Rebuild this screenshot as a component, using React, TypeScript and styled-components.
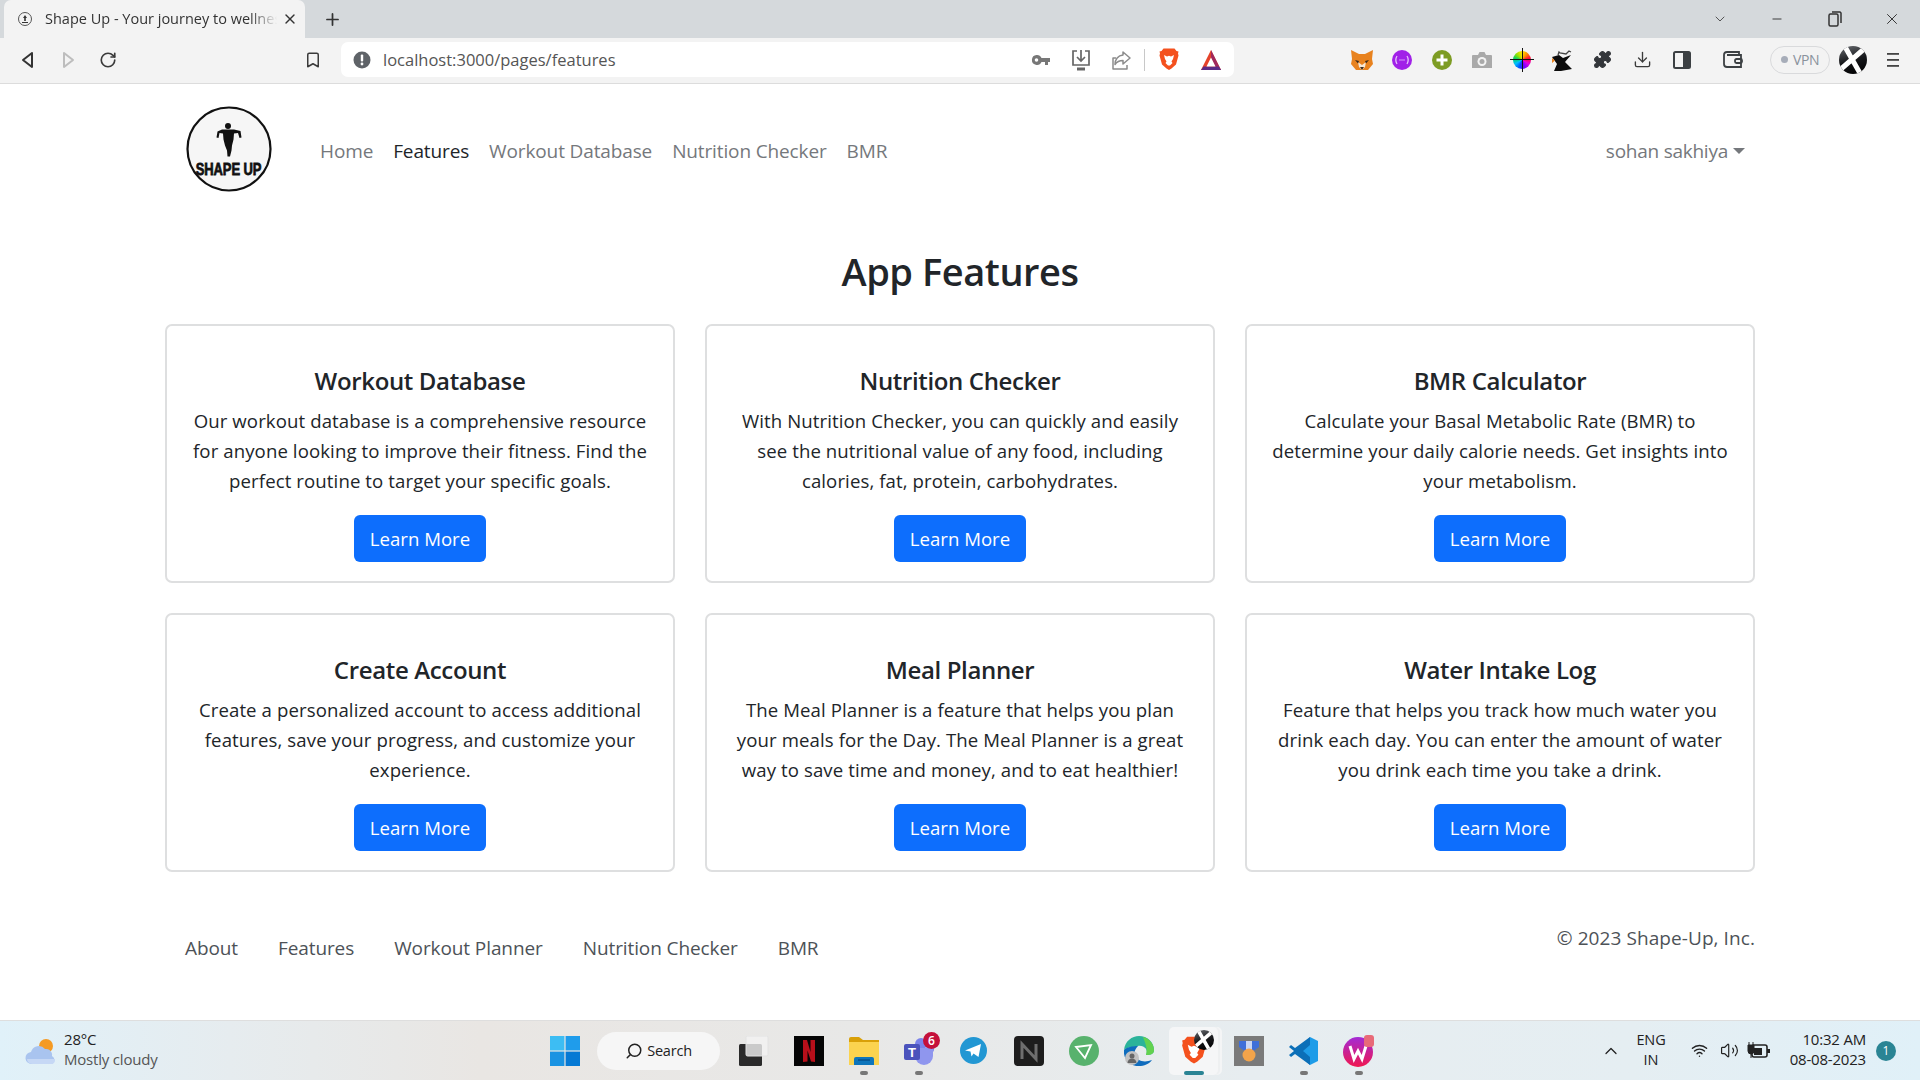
import React from 'react';
import {Bookmark, ChevronDown, ChevronUp, Download, Minus, Plus, Puzzle, RotateCw, Search, Volume2, Wifi, X} from 'lucide-react';
import styled, {createGlobalStyle} from 'styled-components';

const GlobalStyle = createGlobalStyle`
  html, body { margin: 0; padding: 0; background: #fff; }
  body { font-family: "Open Sans", "Noto Sans", sans-serif; color: #212529; }
  * { box-sizing: border-box; }
`;

const Screen = styled.div`
  width: 1920px;
  height: 1080px;
  display: flex;
  flex-direction: column;
  overflow: hidden;
`;

/* browser chrome */
const TabStrip = styled.div`
  height: 38px;
  flex: none;
  display: flex;
  align-items: flex-end;
  background: #d5d9dc;
  padding-left: 4px;
`;
const Tab = styled.div`
  width: 301px;
  height: 38px;
  display: flex;
  align-items: center;
  background: #f3f3f3;
  border-radius: 7px 7px 0 0;
  padding-left: 14px;
  color: #333;
`;
const TabTitle = styled.span`
  width: 237px;
  margin-left: 13px;
  padding-bottom: 2px;
  font-size: 14.5px;
  white-space: nowrap;
  overflow: hidden;
  -webkit-mask-image: linear-gradient(90deg, #000 86%, transparent 98%);
  mask-image: linear-gradient(90deg, #000 86%, transparent 98%);
`;
const NewTab = styled.div`
  width: 54px;
  height: 38px;
  display: flex;
  align-items: center;
  justify-content: center;
  color: #333;
`;
const WindowButtons = styled.div`
  margin-left: auto;
  height: 38px;
  display: flex;
  align-items: center;
  color: #333;
`;
const WinSlot = styled.div<{$w: number}>`
  width: ${p => p.$w}px;
  display: flex;
  justify-content: center;
`;
const Toolbar = styled.div`
  height: 46px;
  flex: none;
  display: flex;
  align-items: center;
  padding: 0 0 2px 8px;
  background: #f3f3f3;
  border-bottom: 1px solid #dcdcdc;
`;
const Slot = styled.div<{$w?: number; $ml?: number; $color?: string}>`
  width: ${p => p.$w ?? 40}px;
  height: 34px;
  margin-left: ${p => p.$ml ?? 0}px;
  flex: none;
  display: flex;
  align-items: center;
  justify-content: center;
  color: ${p => p.$color ?? '#3a3a3a'};
`;
const Omnibox = styled.div`
  width: 893px;
  height: 35px;
  margin-left: 8px;
  flex: none;
  display: flex;
  align-items: center;
  background: #fff;
  border-radius: 7px;
  padding-left: 12px;
`;
const Url = styled.span`
  margin-left: 12px;
  font-size: 16.5px;
  color: #555;
`;
const OmniActions = styled.div`
  margin-left: auto;
  display: flex;
  align-items: center;
  padding-right: 2px;
`;
const Separator = styled.div`
  width: 1px;
  height: 22px;
  background: #c8c8c8;
  margin: 0 3px;
`;
const VpnPill = styled.div`
  width: 60px;
  height: 28px;
  margin-left: 17px;
  flex: none;
  display: flex;
  align-items: center;
  justify-content: center;
  gap: 5px;
  border: 1.5px solid #d9dadc;
  border-radius: 14px;
  font-size: 14px;
  letter-spacing: -0.4px;
  color: #8a929c;
`;
const VpnDot = styled.span`
  width: 7px;
  height: 7px;
  border-radius: 50%;
  background: #a7adb9;
`;
const ColorWheel = styled.span`
  position: relative;
  width: 18px;
  height: 18px;
  border-radius: 50%;
  background: conic-gradient(#ffe600, #ff8a00, #ff0040, #e000e0, #7a00ff, #0050ff, #00c0ff, #00d060, #9be000, #ffe600);
  &::before {
    content: '';
    position: absolute;
    left: 8.5px;
    top: -3px;
    width: 1px;
    height: 24px;
    background: #111;
  }
  &::after {
    content: '';
    position: absolute;
    left: -3px;
    top: 8.5px;
    width: 24px;
    height: 1px;
    background: #111;
  }
`;

/* page */
const Page = styled.main`
  flex: 1;
  min-height: 0;
  width: 1590px;
  margin-left: 165px;
  display: flex;
  flex-direction: column;
`;
const Navbar = styled.nav`
  height: 86px;
  margin-top: 22px;
  display: flex;
  align-items: center;
  padding-left: 21px;
  font-size: 19px;
  letter-spacing: -0.13px;
`;
const Brand = styled.div`
  width: 86px;
  height: 86px;
  margin-right: 48px;
  flex: none;
`;
const NavLink = styled.a<{$active?: boolean}>`
  margin-right: 20px;
  padding-top: 4px;
  color: ${p => (p.$active ? '#212529' : '#75787c')};
`;
const UserMenu = styled.div`
  margin-left: auto;
  margin-right: 10px;
  padding-top: 4px;
  display: flex;
  align-items: center;
  gap: 5px;
  color: #75787c;
  letter-spacing: -0.25px;
`;
const Caret = styled.span`
  width: 0;
  height: 0;
  border-left: 6px solid transparent;
  border-right: 6px solid transparent;
  border-top: 6px solid #75787c;
`;
const Heading = styled.h1`
  margin: 55px 0 0;
  height: 48px;
  line-height: 48px;
  text-align: center;
  font-size: 38px;
  font-weight: 600;
  letter-spacing: -0.45px;
`;
const CardGrid = styled.section`
  margin-top: 29px;
  display: grid;
  grid-template-columns: repeat(3, 510px);
  grid-auto-rows: 259px;
  column-gap: 30px;
  row-gap: 30px;
`;
const Card = styled.article`
  display: flex;
  flex-direction: column;
  align-items: center;
  padding: 40px 16px 0;
  border: 2px solid #dedfe0;
  border-radius: 7px;
  text-align: center;
`;
const CardTitle = styled.h2`
  margin: 0;
  height: 30px;
  line-height: 30px;
  font-size: 24px;
  font-weight: 600;
  letter-spacing: -0.35px;
`;
const CardText = styled.p`
  margin: 10px 0 0;
  width: 466px;
  font-size: 18.6px;
  line-height: 30px;
  letter-spacing: 0.1px;
`;
const LearnButton = styled.button`
  width: 132px;
  height: 47px;
  margin-top: 19px;
  flex: none;
  border: none;
  border-radius: 6px;
  background: #0d6efd;
  color: #fff;
  font-family: inherit;
  font-size: 18.6px;
`;
const Footer = styled.footer`
  margin-top: 53px;
  display: flex;
  align-items: flex-start;
  font-size: 19px;
  letter-spacing: -0.1px;
`;
const FooterLinks = styled.div`
  padding: 10px 0 0 20px;
  display: flex;
  gap: 40px;
  color: #4d5257;
`;
const Copyright = styled.div`
  margin-left: auto;
  color: #4d5257;
  letter-spacing: 0.08px;
`;

/* taskbar */
const Taskbar = styled.footer`
  height: 60px;
  flex: none;
  display: flex;
  align-items: center;
  border-top: 1px solid #dedede;
  background: linear-gradient(90deg, #e0f1f9 0%, #e6ecef 12%, #e9e6e3 25%, #e8e8e7 45%, #e7edf0 65%, #e5eef2 85%, #e0f0f8 100%);
`;
const Weather = styled.div`
  width: 550px;
  flex: none;
  display: flex;
  align-items: center;
  gap: 7px;
  padding-left: 25px;
`;
const WeatherText = styled.div`
  padding-bottom: 4px;
  font-size: 15px;
  line-height: 20px;
  letter-spacing: -0.2px;
  color: #222;
`;
const WeatherSub = styled.div`
  color: #555;
`;
const SearchPill = styled.div`
  width: 123px;
  height: 38px;
  margin: 0 6px 0 17px;
  flex: none;
  display: flex;
  align-items: center;
  justify-content: center;
  gap: 4px;
  border-radius: 19px;
  background: #f6f6f6;
  font-size: 14.5px;
  letter-spacing: -0.2px;
  color: #222;
`;
const TaskSlot = styled.div`
  position: relative;
  width: 55px;
  height: 50px;
  flex: none;
  display: flex;
  align-items: center;
  justify-content: center;
`;
const ActiveTile = styled(TaskSlot)`
  &::before {
    content: '';
    position: absolute;
    top: 1px;
    bottom: 1px;
    left: 3px;
    right: 3px;
    border-radius: 5px;
    background: #f5f6f7;
    box-shadow: 2px 0 0 #eef0f1, 4px 0 0 #f4f5f6;
  }
  > * { position: relative; }
`;
const RunDot = styled.span<{$active?: boolean}>`
  position: absolute !important;
  left: 50%;
  bottom: 1px;
  transform: translateX(-50%);
  width: ${p => (p.$active ? 20 : 8)}px;
  height: 4px;
  border-radius: 2px;
  background: ${p => (p.$active ? '#2a8494' : '#777')};
`;
const NotifyBadge = styled.span`
  position: absolute;
  top: 6px;
  right: 6px;
  width: 17px;
  height: 17px;
  border-radius: 50%;
  background: #c4103a;
  color: #fff;
  font-size: 12px;
  font-weight: 600;
  line-height: 17px;
  text-align: center;
`;
const AvatarOverlay = styled.div`
  position: absolute !important;
  top: 4px;
  right: 7px;
  line-height: 0;
`;
const Tray = styled.div`
  margin-left: auto;
  display: flex;
  align-items: center;
  color: #222;
`;
const TrayLang = styled.div`
  width: 50px;
  margin: 0 8px 0 5px;
  padding-bottom: 2px;
  text-align: center;
  font-size: 14.5px;
  line-height: 20px;
  letter-spacing: -0.1px;
`;
const TrayIcon = styled.div`
  width: 30px;
  display: flex;
  justify-content: center;
`;
const Clock = styled.div`
  width: 90px;
  margin-left: 2px;
  padding-bottom: 4px;
  text-align: right;
  font-size: 15px;
  line-height: 20px;
  letter-spacing: -0.2px;
`;
const CountBadge = styled.div`
  width: 20px;
  height: 20px;
  margin: 0 24px 0 10px;
  border-radius: 50%;
  background: #2a8494;
  color: #fff;
  font-size: 12px;
  line-height: 20px;
  text-align: center;
`;

const features = [
  {title: 'Workout Database', text: 'Our workout database is a comprehensive resource for anyone looking to improve their fitness. Find the perfect routine to target your specific goals.'},
  {title: 'Nutrition Checker', text: 'With Nutrition Checker, you can quickly and easily see the nutritional value of any food, including calories, fat, protein, carbohydrates.'},
  {title: 'BMR Calculator', text: 'Calculate your Basal Metabolic Rate (BMR) to determine your daily calorie needs. Get insights into your metabolism.'},
  {title: 'Create Account', text: 'Create a personalized account to access additional features, save your progress, and customize your experience.'},
  {title: 'Meal Planner', text: 'The Meal Planner is a feature that helps you plan your meals for the Day. The Meal Planner is a great way to save time and money, and to eat healthier!'},
  {title: 'Water Intake Log', text: 'Feature that helps you track how much water you drink each day. You can enter the amount of water you drink each time you take a drink.'},
];

const Logo = () => (
  <svg width="86" height="86" viewBox="0 0 86 86">
    <circle cx="43" cy="43" r="41.5" fill="#f6f6f6" stroke="#111" strokeWidth="2.2" />
    <circle cx="42" cy="20" r="3" fill="#111" />
    <path d="M36 23.500h12l6.500 1.500 1 6.500-2 .5-1.500-5-4 .5-.5 6-1.500 6-.5 5-1.500 6h-2.500l-.5-6-2-5-1.500-6-.5-6-3.500-.5-1 5-2 -.5 1-6z" fill="#111" />
    <text transform="translate(42.500 69) scale(1 1.25)" textAnchor="middle" fontFamily="Liberation Sans" fontWeight="700" fontSize="13" fill="#111" stroke="#111" strokeWidth="0.6">SHAPE UP</text>
  </svg>
);

const Tri = ({dir, color}: {dir: 'l' | 'r'; color: string}) => (
  <svg width="16" height="18" viewBox="0 0 16 18" fill="none" stroke={color} strokeWidth="2" strokeLinejoin="round">
    <path d={dir === 'l' ? 'M12 2 3 9l9 7z' : 'M4 2l9 7-9 7z'} />
  </svg>
);

const InfoDot = () => (
  <svg width="18" height="18" viewBox="0 0 18 18">
    <circle cx="9" cy="9" r="8.500" fill="#5f6368" />
    <rect x="7.800" y="3.500" width="2.400" height="7" rx="1" fill="#fff" />
    <circle cx="9" cy="13" r="1.400" fill="#fff" />
  </svg>
);

const KeyGlyph = () => (
  <svg width="20" height="12" viewBox="0 0 20 12" fill="#777">
    <path d="M5.500 1A5 5 0 0 1 10.500 4H19v4h-2v3h-3V8h-3.500A5 5 0 1 1 5.500 1zm0 3.200a1.800 1.800 0 1 0 0 3.600 1.800 1.800 0 0 0 0-3.600z" />
  </svg>
);

const SaveGlyph = () => (
  <svg width="20" height="22" viewBox="0 0 20 22" fill="none" stroke="#666" strokeWidth="1.700">
    <path d="M6 2H2v14h16V2h-4" />
    <path d="M10 1v10M6 8l4 4 4-4" />
    <path d="M6 20h8" strokeWidth="3" />
  </svg>
);

const ShareGlyph = () => (
  <svg width="20" height="20" viewBox="0 0 20 20" fill="none" stroke="#8c8c8c" strokeWidth="1.500" strokeLinejoin="round">
    <path d="M5 8H2v11h14v-4" />
    <path d="M12 2l7 6-7 6v-3.500c-4 0-6 1-8 4 0-5 3-9 8-9.500z" />
  </svg>
);

const BraveLion = ({size = 24}: {size?: number}) => (
  <svg width={size} height={size} viewBox="0 0 24 24">
    <path d="M6.500 0.500h11l2 2.500 2 .5-.5 2 .5 2-2.500 9-4.500 4-2.500 1.500L9.500 20.500 5 16.500l-2.500-9 .5-2-.5-2 2-.5z" fill="#f4511e" />
    <path d="M7 7l3 1.500 2-.7 2 .7L17 7l-1 4-1.500 2.500 1 1.500-2.500 2.500h-2L8.500 15l1-1.500L8 11z" fill="#fff" />
  </svg>
);

const BatIcon = () => (
  <svg width="24" height="24" viewBox="0 0 24 24">
    <path d="M12 2l10 20H2z" fill="#e5432a" />
    <path d="M12 2l10 20h-4L12 10z" fill="#a0285c" />
    <path d="M2 22l2.500-3.500h15L22 22z" fill="#5b2a86" />
    <path d="M12 9.500l4.500 9h-9z" fill="#fff" />
  </svg>
);

const Fox = () => (
  <svg width="24" height="24" viewBox="0 0 24 24">
    <path d="M1 2l8 4h6l8-4-1 9 1 5-5 6H6l-5-6 1-5z" fill="#e8821e" />
    <path d="M8 14l4 3 4-3-1 5-3 3-3-3z" fill="#f6e7d6" />
    <path d="M5 12l4 1-1 2.500zm14 0l-4 1 1 2.500zM10 19h4l-2 3z" fill="#3b2a1c" />
  </svg>
);

const PurpleExt = () => (
  <svg width="20" height="20" viewBox="0 0 20 20">
    <circle cx="10" cy="10" r="10" fill="#a121e8" />
    <path d="M5 6c-1.500 2.500-1.500 5.500 0 8M15 6c1.500 2.500 1.500 5.500 0 8" fill="none" stroke="#e5c4fa" strokeWidth="1.300" />
    <path d="M7.500 10h1M9.500 10h1M11.500 10h1" stroke="#e5c4fa" strokeWidth="1.300" />
  </svg>
);

const GreenPlus = () => (
  <svg width="20" height="20" viewBox="0 0 20 20">
    <circle cx="10" cy="10" r="10" fill="#7d9c23" />
    <path d="M8.500 4.500h3v4h4v3h-4v4h-3v-4h-4v-3h4z" fill="#fff" />
  </svg>
);

const CameraExt = () => (
  <svg width="20" height="18" viewBox="0 0 20 18">
    <path d="M1 4h5l1.500-3h5L14 4h5a1 1 0 0 1 1 1v12H0V5a1 1 0 0 1 1-1z" fill="#a9a9a9" />
    <circle cx="10" cy="10.500" r="4.500" fill="#f3f3f3" />
    <circle cx="10" cy="10.500" r="2.500" fill="#a9a9a9" />
  </svg>
);

const DarkExt = () => (
  <svg width="22" height="22" viewBox="0 0 22 22">
    <path d="M1 8l7-2 4 3 8-3-6 7 7 7-11 2H3l3-7z" fill="#0c0c0c" />
    <path d="M1 9l3 2.500L1 14z" fill="#e8821e" />
    <path d="M7 6l1-3 1 1 6 1 3-3 2 1" stroke="#444" strokeWidth="1.300" fill="none" />
  </svg>
);

const SidePanel = () => (
  <svg width="18" height="18" viewBox="0 0 18 18">
    <rect x="1" y="1" width="16" height="16" rx="1.500" fill="none" stroke="#3c4043" strokeWidth="2" />
    <rect x="10" y="1" width="7" height="16" fill="#3c4043" />
  </svg>
);

const Wallet = () => (
  <svg width="20" height="18" viewBox="0 0 20 18" fill="none" stroke="#3c4043" strokeWidth="1.800">
    <path d="M16 4V1H4a3 3 0 0 0-3 3v9a3 3 0 0 0 3 3h14V4H4" />
    <rect x="12" y="8" width="7" height="4" rx="1.500" />
  </svg>
);

const Profile = ({size = 28}: {size?: number}) => (
  <svg width={size} height={size} viewBox="0 0 28 28">
    <defs>
      <linearGradient id={`dark${size}`} x1="0" y1="0" x2="0.300" y2="1">
        <stop offset="0" stopColor="#6a6d72" />
        <stop offset="0.600" stopColor="#17181b" />
        <stop offset="1" stopColor="#060607" />
      </linearGradient>
      <clipPath id={`round${size}`}>
        <circle cx="14" cy="14" r="14" />
      </clipPath>
    </defs>
    <circle cx="14" cy="14" r="14" fill={`url(#dark${size})`} />
    <g clipPath={`url(#round${size})`} stroke="#fff" strokeWidth="5">
      <path d="M5 -1 22 29M25 3 2 23" />
    </g>
  </svg>
);

const Burger = () => (
  <svg width="12" height="14" viewBox="0 0 12 14" fill="#444">
    <rect y="0" width="12" height="1.800" /><rect y="6" width="12" height="1.800" /><rect y="12" width="12" height="1.800" />
  </svg>
);

const Cloud = () => (
  <svg width="32" height="32" viewBox="0 0 32 32">
    <circle cx="21" cy="11" r="7" fill="#f59a23" />
    <path d="M7 29a6 6 0 0 1-1-12 8 8 0 0 1 14-3 6 6 0 0 1 7 7 4.500 4.500 0 0 1 0 8z" fill="#a9c4ef" />
    <path d="M2 24h28v1a4 4 0 0 1-3 4H7a5 5 0 0 1-5-5z" fill="#c6d8f5" />
  </svg>
);

const WinLogo = () => (
  <svg width="30" height="30" viewBox="0 0 30 30">
    <rect width="14.400" height="14.400" fill="#3dbdf3" />
    <rect x="15.600" width="14.400" height="14.400" fill="#1f9ceb" />
    <rect y="15.600" width="14.400" height="14.400" fill="#1a93e2" />
    <rect x="15.600" y="15.600" width="14.400" height="14.400" fill="#0679d4" />
  </svg>
);

const FilesStack = () => (
  <svg width="30" height="30" viewBox="0 0 30 30">
    <rect x="0" y="8" width="23" height="22" rx="1.500" fill="#2a2a2a" />
    <rect x="7" y="0" width="22" height="20" rx="1.500" fill="#f2f2f2" fillOpacity="0.8" stroke="#e2e2e2" />
  </svg>
);

const Netflix = () => (
  <svg width="30" height="30" viewBox="0 0 30 30">
    <rect width="30" height="30" fill="#050505" />
    <path d="M9 4h4l3.500 12V4H21v22l-4-.6-3.500-11v11L9 26z" fill="#b80f1a" />
  </svg>
);

const Folder = () => (
  <svg width="30" height="28" viewBox="0 0 30 28">
    <path d="M0 2a2 2 0 0 1 2-2h8l4 3h16v25H0z" fill="#d9a008" />
    <rect y="5" width="30" height="23" fill="#fbd34f" />
    <path d="M5 28v-6a2 2 0 0 1 2-2h16a2 2 0 0 1 2 2v6z" fill="#0e75bb" />
    <path d="M9 23h12" stroke="#05508c" strokeWidth="1.500" />
  </svg>
);

const Teams = () => (
  <svg width="30" height="28" viewBox="0 0 30 28">
    <circle cx="26" cy="12" r="4" fill="#7b83eb" />
    <circle cx="17" cy="7" r="6" fill="#7b83eb" />
    <path d="M11 11h18v8a9 9 0 0 1-18 0z" fill="#8f96ee" />
    <rect y="7" width="16" height="16" rx="2" fill="#4b53bc" />
    <text x="8" y="20" textAnchor="middle" fontFamily="Liberation Sans" fontWeight="700" fontSize="13" fill="#fff">T</text>
  </svg>
);

const Telegram = () => (
  <svg width="27" height="27" viewBox="0 0 27 27">
    <circle cx="13.500" cy="13.500" r="13.500" fill="#2297d3" />
    <path d="M5 13.500 21 7l-2.500 13-5-3.500-2 3-1-5z" fill="#fff" />
  </svg>
);

const NotionDark = () => (
  <svg width="30" height="30" viewBox="0 0 30 30">
    <rect width="30" height="30" rx="4" fill="#1d1d1d" />
    <path d="M8 23V8l14 15V8" fill="none" stroke="#6e6e6e" strokeWidth="3" />
  </svg>
);

const Proton = () => (
  <svg width="30" height="30" viewBox="0 0 30 30">
    <circle cx="15" cy="15" r="15" fill="#58b26d" />
    <path d="M7 11l15-2-6 13z" fill="none" stroke="#fff" strokeWidth="1.800" />
  </svg>
);

const Edge = () => (
  <svg width="30" height="30" viewBox="0 0 30 30">
    <path d="M0 14C1 5 8 0 15 0c8 0 15 6 15 14 0 4-3 5-8 5 3-5-2-10-8-9-5 1-11 1-14 4z" fill="#2bb39a" />
    <path d="M19 1c6 1 11 7 11 13 0 4-3 5-8 5 2-7-1-12-3-18z" fill="#63d24f" />
    <path d="M0 14c-1 9 6 16 15 16 5 0 10-2 13-6-8 3-15 1-17-5-1-3 0-6 3-9-6 0-11 1-14 4z" fill="#0f6cbd" />
    <circle cx="8" cy="22" r="7" fill="#c2c2c2" />
    <circle cx="8" cy="20" r="2.500" fill="#666" />
    <path d="M3.500 27a4.500 4.500 0 0 1 9 0z" fill="#666" />
  </svg>
);

const Medal = () => (
  <svg width="30" height="30" viewBox="0 0 30 30">
    <rect width="30" height="30" fill="#7a7a7a" />
    <path d="M5 5h20v6l-7 5h-6l-7-5z" fill="#3f6fd9" />
    <rect x="12" y="5" width="6" height="9" fill="#c9d6f4" />
    <circle cx="15" cy="19" r="6.500" fill="#f3a44a" />
  </svg>
);

const VSCode = () => (
  <svg width="30" height="30" viewBox="0 0 30 30">
    <path d="M21 1l8 4v20l-8 4L8 16z" fill="#1e9ce8" />
    <path d="M21 1v8l-7 6 7 6v8L6 18l-4 3-2-2 5-4-5-4 2-2 4 3z" fill="#0b6fb8" />
  </svg>
);

const Wps = () => (
  <svg width="32" height="32" viewBox="0 0 32 32">
    <defs>
      <linearGradient id="wpsGrad" x1="0" y1="0" x2="0" y2="1">
        <stop offset="0" stopColor="#a32bd6" />
        <stop offset="1" stopColor="#f0174f" />
      </linearGradient>
    </defs>
    <circle cx="15" cy="17" r="15" fill="url(#wpsGrad)" />
    <path d="M7 11l4 13 4-8 4 8 4-13" fill="none" stroke="#fff" strokeWidth="3" />
    <rect x="21" y="0" width="10" height="12" rx="3" fill="#e86a78" />
  </svg>
);

const BatteryPlug = () => (
  <svg width="24" height="18" viewBox="0 0 24 18">
    <rect x="5" y="3" width="15" height="12" rx="2" fill="none" stroke="#222" strokeWidth="1.600" />
    <rect x="7" y="6" width="8" height="7" fill="#222" />
    <rect x="20" y="7" width="3" height="4" fill="#222" />
    <path d="M1 3h6v6a3 3 0 0 1-6 0zM2 0v3M6 0v3M4 11v5" stroke="#222" fill="#222" />
  </svg>
);

function App() {
  return (
    <Screen>
      <GlobalStyle />
      <TabStrip>
        <Tab>
          <svg width="14" height="14" viewBox="0 0 14 14">
            <circle cx="7" cy="7" r="6.500" fill="#f3f3f3" stroke="#555" />
            <path d="M5 6l2-3 2 3zM6.200 6h1.600v3H6.200zM4 10h6v1H4z" fill="#333" />
          </svg>
          <TabTitle>Shape Up - Your journey to wellness</TabTitle>
          <X size={16} strokeWidth={2} />
        </Tab>
        <NewTab><Plus size={19} strokeWidth={2.2} /></NewTab>
        <WindowButtons>
          <WinSlot $w={59}><ChevronDown size={16} strokeWidth={1.2} /></WinSlot>
          <WinSlot $w={56}><Minus size={14} strokeWidth={1.6} /></WinSlot>
          <WinSlot $w={59}>
            <svg width="14" height="16" viewBox="0 0 14 16" fill="none" stroke="#333" strokeWidth="1.500">
              <rect x="1" y="3" width="9" height="12" rx="1.500" />
              <path d="M4 1h8l1 1v10" />
            </svg>
          </WinSlot>
          <WinSlot $w={56}><X size={18} strokeWidth={1.3} /></WinSlot>
        </WindowButtons>
      </TabStrip>

      <Toolbar>
        <Slot><Tri dir="l" color="#333" /></Slot>
        <Slot><Tri dir="r" color="#bdbdbd" /></Slot>
        <Slot><RotateCw size={18} strokeWidth={2.2} /></Slot>
        <Slot $ml={165}><Bookmark size={18} strokeWidth={2} /></Slot>
        <Omnibox>
          <InfoDot />
          <Url>localhost:3000/pages/features</Url>
          <OmniActions>
            <Slot><KeyGlyph /></Slot>
            <Slot><SaveGlyph /></Slot>
            <Slot><ShareGlyph /></Slot>
            <Separator />
            <Slot $w={42}><BraveLion /></Slot>
            <Slot $w={42}><BatIcon /></Slot>
          </OmniActions>
        </Omnibox>
        <Slot $ml={108}><Fox /></Slot>
        <Slot><PurpleExt /></Slot>
        <Slot><GreenPlus /></Slot>
        <Slot><CameraExt /></Slot>
        <Slot><ColorWheel /></Slot>
        <Slot><DarkExt /></Slot>
        <Slot $color="#33363a"><Puzzle size={19} fill="#33363a" strokeWidth={1.5} /></Slot>
        <Slot><Download size={19} strokeWidth={1.7} /></Slot>
        <Slot><SidePanel /></Slot>
        <Slot $ml={11}><Wallet /></Slot>
        <VpnPill><VpnDot />VPN</VpnPill>
        <Slot $w={44} $ml={1}><Profile /></Slot>
        <Slot $w={34} $ml={1}><Burger /></Slot>
      </Toolbar>

      <Page>
        <Navbar>
          <Brand><Logo /></Brand>
          <NavLink>Home</NavLink>
          <NavLink $active>Features</NavLink>
          <NavLink>Workout Database</NavLink>
          <NavLink>Nutrition Checker</NavLink>
          <NavLink>BMR</NavLink>
          <UserMenu>sohan sakhiya<Caret /></UserMenu>
        </Navbar>
        <Heading>App Features</Heading>
        <CardGrid>
          {features.map(f => (
            <Card key={f.title}>
              <CardTitle>{f.title}</CardTitle>
              <CardText>{f.text}</CardText>
              <LearnButton>Learn More</LearnButton>
            </Card>
          ))}
        </CardGrid>
        <Footer>
          <FooterLinks>
            <span>About</span>
            <span>Features</span>
            <span>Workout Planner</span>
            <span>Nutrition Checker</span>
            <span>BMR</span>
          </FooterLinks>
          <Copyright>© 2023 Shape-Up, Inc.</Copyright>
        </Footer>
      </Page>

      <Taskbar>
        <Weather>
          <Cloud />
          <WeatherText>
            <div>28°C</div>
            <WeatherSub>Mostly cloudy</WeatherSub>
          </WeatherText>
        </Weather>
        <WinLogo />
        <SearchPill><Search size={18} strokeWidth={2} style={{transform: 'scaleX(-1)'}} />Search</SearchPill>
        <TaskSlot><FilesStack /></TaskSlot>
        <TaskSlot><Netflix /></TaskSlot>
        <TaskSlot><Folder /><RunDot /></TaskSlot>
        <TaskSlot><Teams /><NotifyBadge>6</NotifyBadge><RunDot /></TaskSlot>
        <TaskSlot><Telegram /></TaskSlot>
        <TaskSlot><NotionDark /></TaskSlot>
        <TaskSlot><Proton /></TaskSlot>
        <TaskSlot><Edge /></TaskSlot>
        <ActiveTile>
          <BraveLion size={30} />
          <AvatarOverlay><Profile size={20} /></AvatarOverlay>
          <RunDot $active />
        </ActiveTile>
        <TaskSlot><Medal /></TaskSlot>
        <TaskSlot><VSCode /><RunDot /></TaskSlot>
        <TaskSlot><Wps /><RunDot /></TaskSlot>
        <Tray>
          <ChevronUp size={20} strokeWidth={1.5} />
          <TrayLang>ENG<br />IN</TrayLang>
          <TrayIcon><Wifi size={17} strokeWidth={2} /></TrayIcon>
          <TrayIcon><Volume2 size={19} strokeWidth={1.5} /></TrayIcon>
          <TrayIcon><BatteryPlug /></TrayIcon>
          <Clock>10:32 AM<br />08-08-2023</Clock>
          <CountBadge>1</CountBadge>
        </Tray>
      </Taskbar>
    </Screen>
  );
}

export default App;
